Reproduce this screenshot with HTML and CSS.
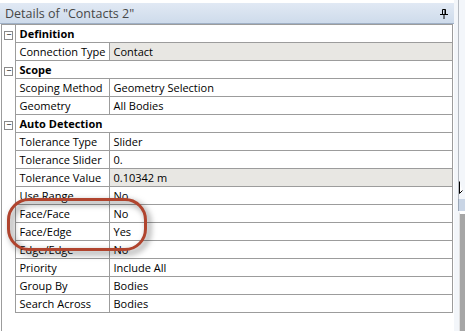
FILE: index.html
```html
<!DOCTYPE html>
<html lang="en">
<head>
    <meta charset="UTF-8">
    <title>Details of "Contacts 2"</title>
    <link rel="stylesheet" href="styles.css">
</head>
<body>
    <div class="app">
        <div class="panel">
            <div class="titlebar">
                <span class="title">Details of "Contacts 2"</span>
                <svg class="pin" width="8" height="10" viewBox="0 0 8 10">
                    <path d="M2.5 0.5h3v5h-3z" fill="none" stroke="#000" stroke-width="1"/>
                    <path d="M5 0.5v5" stroke="#000" stroke-width="1"/>
                    <path d="M0 5.5h8" stroke="#000" stroke-width="1"/>
                    <path d="M4 5.5v4.5" stroke="#000" stroke-width="1"/>
                </svg>
            </div>

            <div class="details">
                <table class="grid">
                    <colgroup>
                        <col class="col-toggle">
                        <col class="col-label">
                        <col>
                    </colgroup>
                    <tr class="category">
                        <td class="toggle"><span class="box">&minus;</span></td>
                        <td colspan="2">Definition</td>
                    </tr>
                    <tr>
                        <td class="toggle"></td>
                        <td class="label">Connection Type</td>
                        <td class="value shaded">Contact</td>
                    </tr>
                    <tr class="category">
                        <td class="toggle"><span class="box">&minus;</span></td>
                        <td colspan="2">Scope</td>
                    </tr>
                    <tr>
                        <td class="toggle"></td>
                        <td class="label">Scoping Method</td>
                        <td class="value">Geometry Selection</td>
                    </tr>
                    <tr>
                        <td class="toggle"></td>
                        <td class="label">Geometry</td>
                        <td class="value">All Bodies</td>
                    </tr>
                    <tr class="category">
                        <td class="toggle"><span class="box">&minus;</span></td>
                        <td colspan="2">Auto Detection</td>
                    </tr>
                    <tr>
                        <td class="toggle"></td>
                        <td class="label">Tolerance Type</td>
                        <td class="value">Slider</td>
                    </tr>
                    <tr>
                        <td class="toggle"></td>
                        <td class="label">Tolerance Slider</td>
                        <td class="value">0.</td>
                    </tr>
                    <tr>
                        <td class="toggle"></td>
                        <td class="label">Tolerance Value</td>
                        <td class="value shaded">0.10342 m</td>
                    </tr>
                    <tr>
                        <td class="toggle"></td>
                        <td class="label">Use Range</td>
                        <td class="value">No</td>
                    </tr>
                    <tr>
                        <td class="toggle"></td>
                        <td class="label">Face/Face</td>
                        <td class="value">No</td>
                    </tr>
                    <tr>
                        <td class="toggle"></td>
                        <td class="label">Face/Edge</td>
                        <td class="value">Yes</td>
                    </tr>
                    <tr>
                        <td class="toggle"></td>
                        <td class="label">Edge/Edge</td>
                        <td class="value">No</td>
                    </tr>
                    <tr>
                        <td class="toggle"></td>
                        <td class="label">Priority</td>
                        <td class="value">Include All</td>
                    </tr>
                    <tr>
                        <td class="toggle"></td>
                        <td class="label">Group By</td>
                        <td class="value">Bodies</td>
                    </tr>
                    <tr>
                        <td class="toggle"></td>
                        <td class="label">Search Across</td>
                        <td class="value">Bodies</td>
                    </tr>
                </table>
                <!-- red callout drawn over the face rows -->
                <div class="callout"></div>
            </div>
        </div>

        <div class="side">
            <div class="side-top">
                <svg class="cursor" width="6" height="14" viewBox="0 0 6 14">
                    <path d="M0.5 0.5v12l3-3" fill="#fff" stroke="#000" stroke-width="1"/>
                </svg>
            </div>
            <div class="side-tab"></div>
            <div class="side-body"></div>
        </div>
    </div>
</body>
</html>
```

FILE: styles.css
```css
body {
    margin: 0;
    background-color: #fff;
    font-family: 'Open Sans', 'Noto Sans', sans-serif;
    font-size: 11px;
    color: #000;
}
.app {
    display: flex;
    width: 465px;
    height: 331px;
    overflow: hidden;
}
.panel {
    width: 455px;
    display: flex;
    flex-direction: column;
    padding-top: 3px;
    background-color: #fff;
}
.titlebar {
    height: 20px;
    display: flex;
    align-items: center;
    justify-content: space-between;
    padding: 0 6px 0 5px;
    background: linear-gradient(#e1e9f4, #cedbeb);
    border-bottom: 1px solid #9fb0c6;
}
.title {
    font-size: 12.5px;
    color: #474747;
}
.pin {
    display: block;
    margin-top: 1px;
}
.details {
    position: relative;
    flex: 1;
    border-left: 1px solid #9c9c9c;
    margin-left: 1px;
}
.grid {
    width: 451px;
    border-collapse: collapse;
    table-layout: fixed;
}
.col-toggle {
    width: 13px;
}
.col-label {
    width: 94px;
}
.grid td {
    height: 17px;
    padding: 0 0 0 4px;
    line-height: 17px;
    white-space: nowrap;
    overflow: hidden;
    border-bottom: 1px solid #9c9c9c;
    border-right: 1px solid #9c9c9c;
}
.grid td.toggle {
    padding: 0;
    border-bottom: none;
    text-align: center;
    vertical-align: middle;
}
.grid tr:first-child td {
    border-top: 1px solid #9c9c9c;
}
.category td {
    font-weight: bold;
}
.shaded {
    background-color: #e8e7e3;
}
.box {
    display: inline-block;
    width: 7px;
    height: 7px;
    border: 1px solid #8a8a8a;
    background-color: #fff;
    font-size: 9px;
    font-weight: normal;
    line-height: 6px;
    text-align: center;
    vertical-align: middle;
    margin-left: 1px;
}
.callout {
    position: absolute;
    left: 5px;
    top: 174px;
    width: 134px;
    height: 47px;
    border: 3px solid #b0442e;
    border-radius: 22px;
    filter: drop-shadow(3px 3px 3px rgba(0, 0, 0, 0.55));
}
.side {
    flex: 1;
    display: flex;
    flex-direction: column;
    background-color: #f3f6fa;
}
.side-top {
    height: 199px;
    margin-left: 4px;
    border-left: 1px solid #b4b9c0;
    display: flex;
    flex-direction: column;
    justify-content: flex-end;
    padding-bottom: 4px;
    box-sizing: border-box;
}
.cursor {
    display: block;
}
.side-tab {
    height: 12px;
    margin-left: 4px;
    background-color: #c9d5e5;
    border-left: 1px solid #9aa6b6;
}
.side-body {
    flex: 1;
    margin-left: 5px;
    border-top: 3px solid #fff;
    border-left: 1px solid #e0e0e0;
    background-color: #a6a6a6;
}
```
